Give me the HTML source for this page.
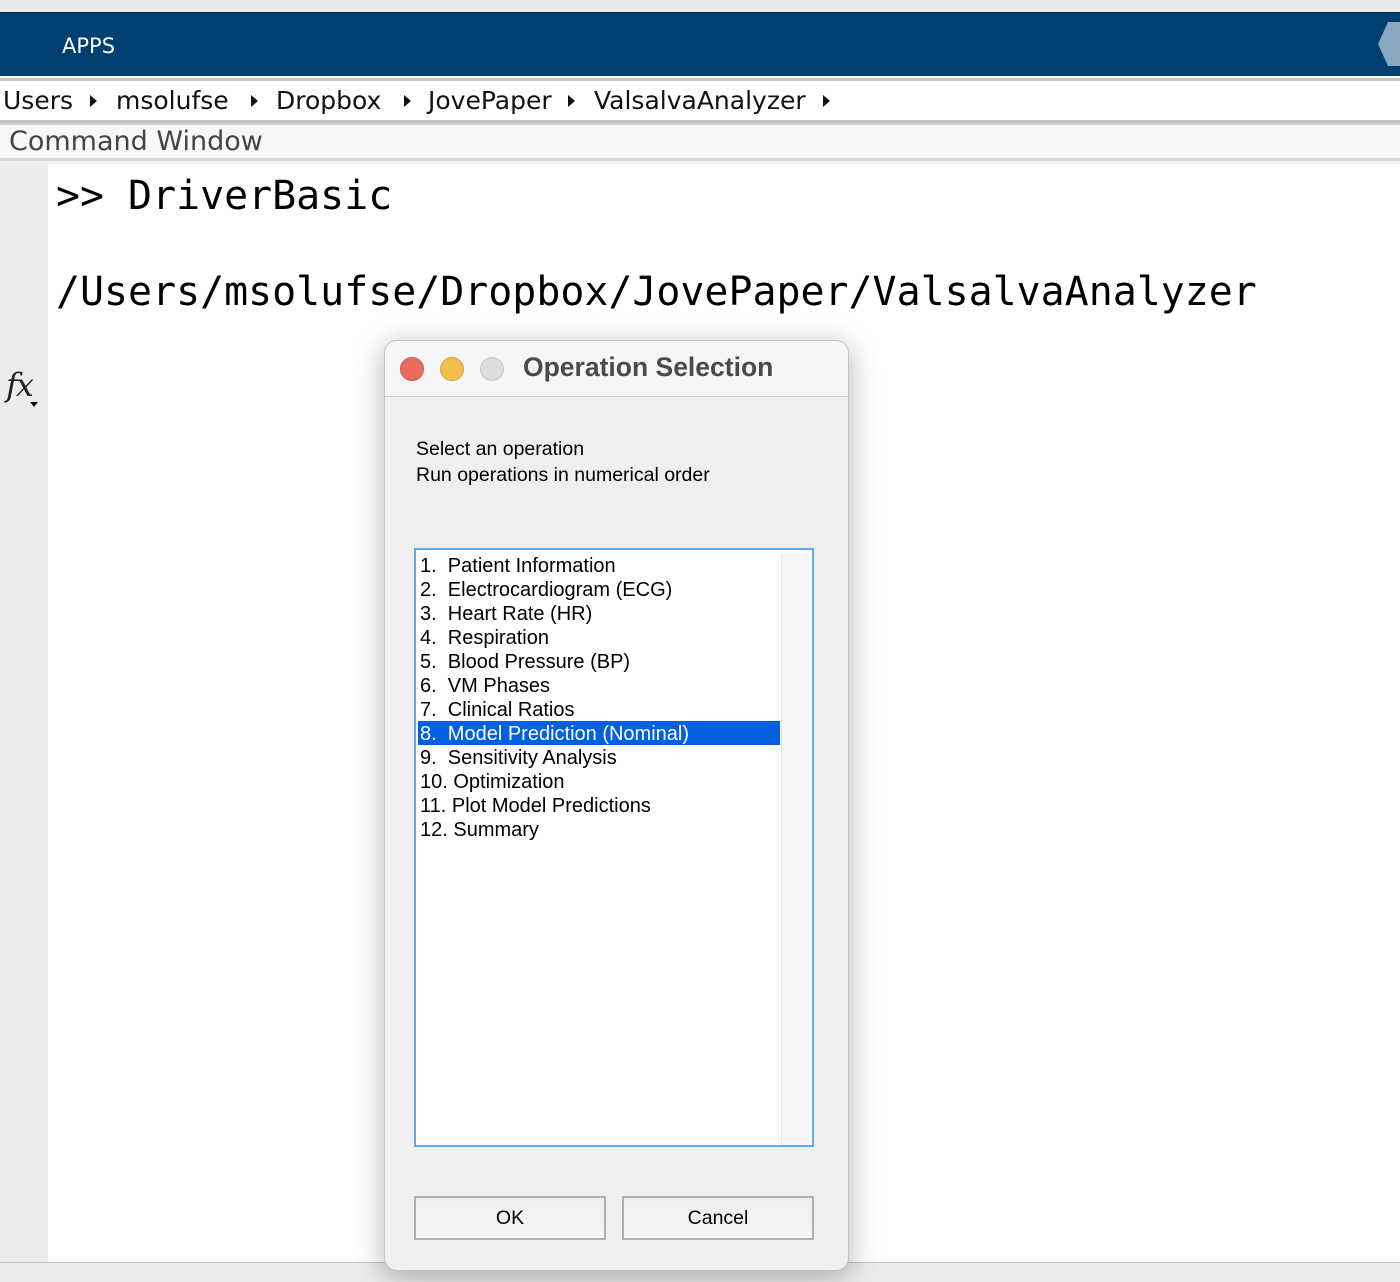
<!DOCTYPE html>
<html><head><meta charset="utf-8"><style>
*{margin:0;padding:0;box-sizing:border-box}
body{width:1400px;height:1282px;position:relative;overflow:hidden;background:#ececec;font-family:"Liberation Sans",Helvetica,sans-serif}
.abs{position:absolute}
.bc{position:absolute;top:86px;font-family:"DejaVu Sans",sans-serif;font-size:25px;color:#111;white-space:pre}
.ar{position:absolute;top:95px}
</style></head><body>
<div class="abs" style="left:0;top:0;width:1400px;height:12px;background:#e8e9eb"></div>
<div class="abs" style="left:0;top:12px;width:1400px;height:64px;background:#003f71;border-top:1px solid #06284a"></div>
<div class="abs" style="left:62px;top:34px;color:#fff;font-size:21px;font-family:'DejaVu Sans',sans-serif">APPS</div>
<svg class="abs" style="left:1376px;top:22px" width="24" height="44"><polygon points="12,0 24,0 24,44 12,44 2,22" fill="#8aa7c2"/></svg>
<div class="abs" style="left:0;top:76px;width:1400px;height:2px;background:#fff"></div>
<div class="abs" style="left:0;top:78px;width:1400px;height:3px;background:#c2c2c2"></div>
<div class="abs" style="left:0;top:81px;width:1400px;height:39px;background:#fff"></div>
<div class="bc" style="left:3px">Users</div>
<div class="bc" style="left:116px">msolufse</div>
<div class="bc" style="left:276px">Dropbox</div>
<div class="bc" style="left:428px">JovePaper</div>
<div class="bc" style="left:594px">ValsalvaAnalyzer</div>
<svg class="ar" style="left:90px" width="8" height="12"><polygon points="0,0 7,6 0,12" fill="#111"/></svg>
<svg class="ar" style="left:251px" width="8" height="12"><polygon points="0,0 7,6 0,12" fill="#111"/></svg>
<svg class="ar" style="left:404px" width="8" height="12"><polygon points="0,0 7,6 0,12" fill="#111"/></svg>
<svg class="ar" style="left:568px" width="8" height="12"><polygon points="0,0 7,6 0,12" fill="#111"/></svg>
<svg class="ar" style="left:823px" width="8" height="12"><polygon points="0,0 7,6 0,12" fill="#111"/></svg>
<div class="abs" style="left:0;top:120px;width:1400px;height:3px;background:#c2c2c2"></div>
<div class="abs" style="left:0;top:123px;width:1400px;height:2px;background:#c5d2df"></div>
<div class="abs" style="left:0;top:125px;width:1400px;height:33px;background:#f8f8f8"></div>
<div class="abs" style="left:9px;top:126px;font-size:27px;color:#444;font-family:'DejaVu Sans',sans-serif">Command Window</div>
<div class="abs" style="left:0;top:158px;width:1400px;height:3px;background:#d8d8d8"></div>
<div class="abs" style="left:0;top:161px;width:1400px;height:3px;background:#f0f0f0"></div>
<div class="abs" style="left:0;top:164px;width:48px;height:1098px;background:#ececec"></div>
<div class="abs" style="left:48px;top:164px;width:1352px;height:1098px;background:#fff"></div>
<div class="abs" style="left:0;top:1262px;width:1400px;height:1px;background:#b6c2d0"></div>
<div class="abs" style="left:6px;top:366px;font-family:'DejaVu Serif',serif;font-style:italic;font-size:32px;color:#222;letter-spacing:-2px">fx</div>
<svg class="abs" style="left:30px;top:402px" width="8" height="6"><polygon points="0,0 8,0 4,5" fill="#111"/></svg>
<div class="abs" style="left:56px;top:173px;font-family:'DejaVu Sans Mono',monospace;font-size:39.9px;color:#000;white-space:pre">&gt;&gt; DriverBasic</div>
<div class="abs" style="left:56px;top:269px;font-family:'DejaVu Sans Mono',monospace;font-size:39.9px;color:#000;white-space:pre">/Users/msolufse/Dropbox/JovePaper/ValsalvaAnalyzer</div>

<div class="abs" style="left:384px;top:340px;width:465px;height:931px;background:#efefef;border:1px solid #c4c4c4;border-radius:13px;box-shadow:0 6px 30px rgba(0,0,0,.3);overflow:hidden">
 <div style="height:56px;background:#f5f6f7;border-bottom:1px solid #cfcfcf;position:relative">
  <div class="abs" style="left:15px;top:16px;width:24px;height:24px;border-radius:50%;background:#ec6a5e;border:1px solid #d05448"></div>
  <div class="abs" style="left:55px;top:16px;width:24px;height:24px;border-radius:50%;background:#f4bf4f;border:1px solid #d8a23a"></div>
  <div class="abs" style="left:95px;top:16px;width:24px;height:24px;border-radius:50%;background:#dcdcdc;border:1px solid #c6c6c6"></div>
  <div class="abs" style="left:138px;top:11px;font-size:26.5px;font-weight:bold;color:#4a4a4a">Operation Selection</div>
 </div>
 <div class="abs" style="left:31px;top:95px;font-size:19.5px;line-height:26px;color:#000">Select an operation<br>Run operations in numerical order</div>
 <div class="abs" style="left:29px;top:207px;width:400px;height:599px;background:#fff;border:2px solid #62a9e8">
  <div class="abs" style="left:365px;top:4px;width:29px;height:591px;background:#f6f6f6;border-left:1px solid #e4e4e4"></div>
  <div class="abs" style="left:2px;top:171px;width:362px;height:24px;background:#0060df"></div>
  <div class="abs" style="left:4px;top:4px;font-size:20px;line-height:24px;color:#000;white-space:pre">1.  Patient Information
2.  Electrocardiogram (ECG)
3.  Heart Rate (HR)
4.  Respiration
5.  Blood Pressure (BP)
6.  VM Phases
7.  Clinical Ratios
<span style="color:#fff">8.  Model Prediction (Nominal)</span>
9.  Sensitivity Analysis
10. Optimization
11. Plot Model Predictions
12. Summary</div>
 </div>
 <div class="abs" style="left:29px;top:855px;width:192px;height:44px;border:2px solid #b0b0b0;background:linear-gradient(#efefef,#f5f5f5);font-size:19.5px;text-align:center;line-height:40px">OK</div>
 <div class="abs" style="left:237px;top:855px;width:192px;height:44px;border:2px solid #b0b0b0;background:linear-gradient(#efefef,#f5f5f5);font-size:19.5px;text-align:center;line-height:40px">Cancel</div>
</div>
</body></html>
